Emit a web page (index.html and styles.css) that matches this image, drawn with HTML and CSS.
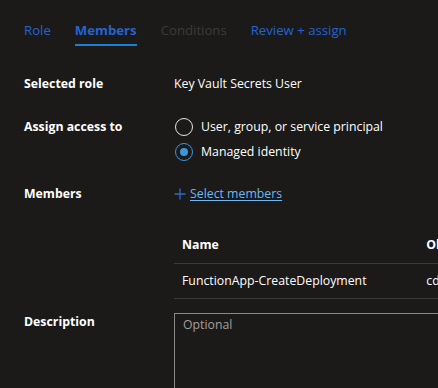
FILE: index.html
```html
<!DOCTYPE html>
<html>
<head>
<meta charset="utf-8">
<link rel="stylesheet" href="styles.css">
</head>
<body>
<div class="page">
  <nav class="tabs">
    <span class="tab link">Role</span>
    <span class="tab active">Members</span>
    <span class="tab disabled">Conditions</span>
    <span class="tab link">Review + assign</span>
  </nav>

  <div class="row r-role">
    <div class="label">Selected role</div>
    <div class="value">Key Vault Secrets User</div>
  </div>

  <div class="row r-assign">
    <div class="label">Assign access to</div>
    <div class="value radios">
      <label class="radio"><span class="circle"></span>User, group, or service principal</label>
      <label class="radio checked"><span class="circle"></span>Managed identity</label>
    </div>
  </div>

  <div class="row r-members">
    <div class="label">Members</div>
    <div class="value">
      <a class="add"><svg class="plus" width="12" height="12" viewBox="0 0 12 12"><path d="M6 0.5V11.5M0.5 6H11.5" stroke="#2b6cc4" stroke-width="1.3" fill="none"/></svg><span class="addtext">Select members</span></a>
    </div>
  </div>

  <div class="row r-table">
    <div class="label"></div>
    <div class="value">
      <div class="table">
        <div class="tr head"><div class="td c1">Name</div><div class="td c2">Object ID</div></div>
        <div class="tr"><div class="td c1">FunctionApp-CreateDeployment</div><div class="td c2">cd3a1f0e-5b2c-4e8a</div></div>
      </div>
    </div>
  </div>

  <div class="row r-desc">
    <div class="label">Description</div>
    <div class="value">
      <div class="textarea"><span class="placeholder">Optional</span></div>
    </div>
  </div>
</div>
</body>
</html>
```

FILE: styles.css
```css
html, body {
  margin: 0;
  padding: 0;
  background: #1b1a19;
  overflow: hidden;
  width: 438px;
  height: 388px;
}
.page {
  font-family: "Open Sans", "Noto Sans", sans-serif;
  font-size: 12.3px;
  color: #ffffff;
  padding-left: 24px;
}
.tabs {
  display: flex;
  gap: 24px;
  padding-top: 20px;
}
.tab {
  font-size: 13.2px;
  line-height: 20px;
  padding-bottom: 4px;
  border-bottom: 2px solid transparent;
  white-space: nowrap;
}
.tab.link { color: #2264d2; }
.tab.active { color: #2264d2; font-weight: 700; border-bottom-color: #1a7fd6; }
.tab.disabled { color: #3b3a39; }

.row {
  display: grid;
  grid-template-columns: 150px 1fr;
  line-height: 20px;
}
.label { font-weight: 700; }
.r-role { margin-top: 28px; }
.r-assign { margin-top: 23px; }
.r-members { margin-top: 22px; }
.r-table { margin-top: 21px; }
.r-desc { margin-top: 14px; }
.r-desc .label { margin-top: -1px; }

.radios { display: flex; flex-direction: column; gap: 5px; }
.radio { display: flex; align-items: center; gap: 8px; white-space: nowrap; }
.circle {
  width: 18px;
  height: 18px;
  border: 1.5px solid #e6e6e6;
  border-radius: 50%;
  box-sizing: border-box;
  margin-left: 1px;
  position: relative;
}
.radio.checked .circle { border-color: #3a96dd; }
.radio.checked .circle::after {
  content: "";
  position: absolute;
  left: 3.5px; top: 3.5px;
  width: 8px; height: 8px;
  border-radius: 50%;
  background: #3a96dd;
}

.add { display: inline-flex; align-items: center; gap: 4px; cursor: pointer; }
.plus { display: block; }
.addtext { color: #6cb8f6; text-decoration: underline; text-underline-offset: 2px; }

.table { width: 400px; white-space: nowrap; }
.tr { display: flex; border-bottom: 1px solid #3b3a39; }
.tr.head { height: 36px; font-weight: 700; }
.tr:not(.head) { height: 34px; }
.td { display: flex; align-items: center; padding-left: 8px; }
.c1 { width: 240px; }
.c2 { width: 150px; }

.textarea {
  height: 120px;
  width: 300px;
  border: 1px solid #8a8886;
  padding: 1px 8px;
}
.placeholder { color: #a19f9d; }
```
